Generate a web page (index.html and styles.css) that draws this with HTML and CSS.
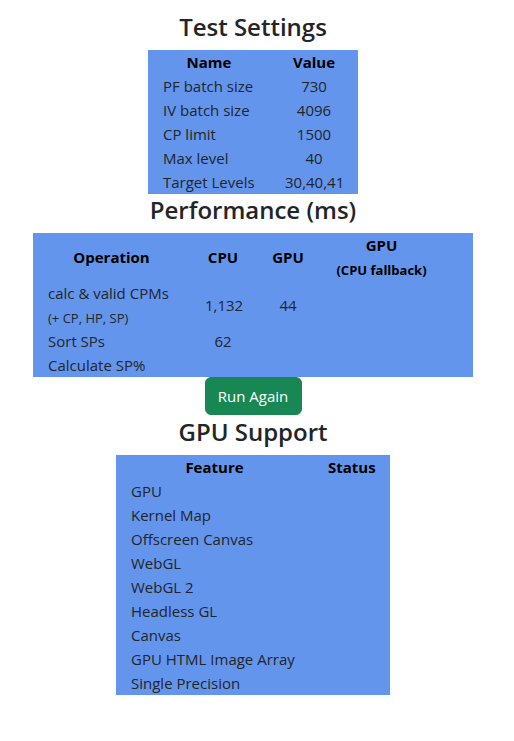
FILE: index.html
```html
<!DOCTYPE html>
<html lang="en">
<head>
<meta charset="utf-8">
<title>Test Settings</title>
<link rel="stylesheet" href="styles.css">
</head>
<body>
<div class="app">
  <h2 class="title">Test Settings</h2>
  <table class="grid settings">
    <colgroup><col class="c-name"><col class="c-value"></colgroup>
    <thead><tr><th>Name</th><th>Value</th></tr></thead>
    <tbody>
      <tr><td>PF batch size</td><td class="num">730</td></tr>
      <tr><td>IV batch size</td><td class="num">4096</td></tr>
      <tr><td>CP limit</td><td class="num">1500</td></tr>
      <tr><td>Max level</td><td class="num">40</td></tr>
      <tr><td>Target Levels</td><td class="num">30,40,41</td></tr>
    </tbody>
  </table>

  <h2 class="title">Performance (ms)</h2>
  <table class="grid perf">
    <colgroup><col class="c-op"><col class="c-cpu"><col class="c-gpu"><col class="c-fb"><col class="c-extra"></colgroup>
    <thead><tr><th>Operation</th><th>CPU</th><th>GPU</th><th>GPU<br><small>(CPU fallback)</small></th><th></th></tr></thead>
    <tbody>
      <tr><td>calc &amp; valid CPMs<br><small>(+ CP, HP, SP)</small></td><td class="num">1,132</td><td class="num">44</td><td class="num"></td><td></td></tr>
      <tr><td>Sort SPs</td><td class="num">62</td><td class="num"></td><td class="num"></td><td></td></tr>
      <tr><td>Calculate SP%</td><td class="num"></td><td class="num"></td><td class="num"></td><td></td></tr>
    </tbody>
  </table>
  <button class="btn-run" type="button">Run Again</button>

  <h2 class="title">GPU Support</h2>
  <table class="grid support">
    <colgroup><col class="c-feature"><col class="c-status"></colgroup>
    <thead><tr><th>Feature</th><th>Status</th></tr></thead>
    <tbody>
      <tr><td>GPU</td><td class="num"></td></tr>
      <tr><td>Kernel Map</td><td class="num"></td></tr>
      <tr><td>Offscreen Canvas</td><td class="num"></td></tr>
      <tr><td>WebGL</td><td class="num"></td></tr>
      <tr><td>WebGL 2</td><td class="num"></td></tr>
      <tr><td>Headless GL</td><td class="num"></td></tr>
      <tr><td>Canvas</td><td class="num"></td></tr>
      <tr><td>GPU HTML Image Array</td><td class="num"></td></tr>
      <tr><td>Single Precision</td><td class="num"></td></tr>
    </tbody>
  </table>
</div>
</body>
</html>
```
FILE: styles.css
```css
html, body {
  margin: 0;
  padding: 0;
  background: #fff;
}
body {
  font-family: "Open Sans", "Noto Sans", sans-serif;
  font-size: 15px;
  line-height: 24px;
  color: #212529;
}
.app {
  width: 506px;
  padding-top: 11px;
  display: flex;
  flex-direction: column;
  align-items: center;
}
.title {
  margin: 0 0 8px;
  font-size: 24px;
  font-weight: 600;
  line-height: 31px;
  text-align: center;
  white-space: nowrap;
}
.grid {
  border-collapse: collapse;
  table-layout: fixed;
  background: #6495ed;
}
.grid th, .grid td {
  padding: 0 15px;
  vertical-align: middle;
  height: 24px;
  white-space: nowrap;
}
.grid th {
  font-weight: 700;
  color: #000;
  text-align: center;
}
.grid td {
  text-align: left;
}
.grid td.num {
  text-align: center;
}
.grid small {
  font-size: 13px;
  line-height: 1;
}
.settings { width: 210px; }
.c-name { width: 122px; }
.c-value { width: 88px; }
.perf { width: 440px; }
.c-op { width: 157px; }
.c-cpu { width: 66px; }
.c-gpu { width: 64px; }
.c-fb { width: 123px; }
.c-extra { width: 30px; }
.support { width: 274px; }
.c-feature { width: 197px; }
.c-status { width: 77px; }
.btn-run {
  font-family: inherit;
  font-size: 15px;
  line-height: 24px;
  padding: 6px 12px;
  margin-bottom: 1px;
  width: 97px;
  height: 38px;
  border: 1px solid #198754;
  border-radius: 6px;
  background: #198754;
  color: #fff;
  cursor: pointer;
  white-space: nowrap;
}
```
